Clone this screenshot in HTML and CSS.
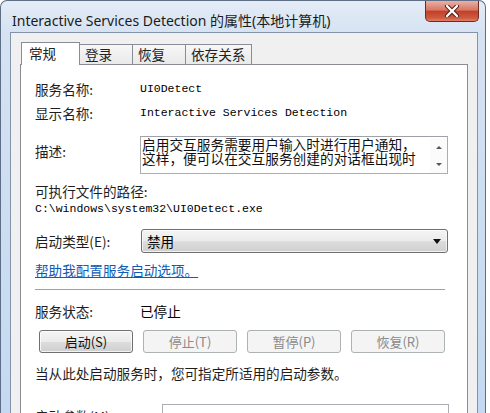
FILE: index.html
```html
<!DOCTYPE html>
<html lang="zh-CN">

<head>
    <meta charset="UTF-8">
    <title>Interactive Services Detection 的属性(本地计算机)</title>
    <link rel="stylesheet" href="styles.css">
</head>

<body>

    <div class="ventana">
        <div class="barra-titulo">
            <span class="titulo">Interactive Services Detection 的属性(本地计算机)</span>
            <div class="cerrar">
                <svg width="16" height="12" viewBox="0 0 16 12">
                    <path d="M3 1 L13 11 M13 1 L3 11" stroke="#4a1a14" stroke-width="4.2" stroke-linecap="round" />
                    <path d="M3 1 L13 11 M13 1 L3 11" stroke="#ffffff" stroke-width="2.4" stroke-linecap="round" />
                </svg>
            </div>
        </div>

        <div class="cliente">
            <div class="pestanas">
                <div class="pestana activa">常规</div>
                <div class="pestana">登录</div>
                <div class="pestana">恢复</div>
                <div class="pestana">依存关系</div>
            </div>

            <div class="panel">
                <div class="fila">
                    <span class="etiqueta">服务名称:</span>
                    <span class="mono">UI0Detect</span>
                </div>
                <div class="fila fila-2">
                    <span class="etiqueta">显示名称:</span>
                    <span class="mono">Interactive Services Detection</span>
                </div>
                <div class="fila fila-desc">
                    <span class="etiqueta etiqueta-desc">描述:</span>
                    <div class="descripcion">
                        <div class="texto-desc">
                            <div>启用交互服务需要用户输入时进行用户通知，</div>
                            <div>这样，便可以在交互服务创建的对话框出现时</div>
                        </div>
                        <div class="scroll">
                            <span class="flecha arriba"></span>
                            <span class="flecha abajo"></span>
                        </div>
                    </div>
                </div>

                <div class="ruta-titulo">可执行文件的路径:</div>
                <div class="mono ruta">C:\windows\system32\UI0Detect.exe</div>

                <div class="fila fila-tipo">
                    <span class="etiqueta">启动类型(E):</span>
                    <div class="combo">
                        <span>禁用</span>
                        <span class="triangulo"></span>
                    </div>
                </div>

                <a class="enlace" href="#">帮助我配置服务启动选项。</a>

                <div class="separador"></div>

                <div class="fila fila-estado">
                    <span class="etiqueta">服务状态:</span>
                    <span>已停止</span>
                </div>

                <div class="botones">
                    <button>启动(S)</button>
                    <button disabled>停止(T)</button>
                    <button disabled>暂停(P)</button>
                    <button disabled>恢复(R)</button>
                </div>

                <div class="nota">当从此处启动服务时，您可指定所适用的启动参数。</div>

                <div class="fila fila-param">
                    <span class="etiqueta etiqueta-param">启动参数(M):</span>
                    <div class="campo"></div>
                </div>
            </div>
        </div>
    </div>

</body>

</html>
```

FILE: styles.css
```css
body {
    margin: 0;
    background: #fff;
    font-family: "Noto Sans CJK SC", sans-serif;
    font-size: 13.6px;
    color: #000;
}

.ventana {
    width: 486px;
    height: 413px;
    box-sizing: border-box;
    border: 1px solid #5d6e86;
    border-bottom: none;
    border-radius: 7px 7px 0 0;
    background: linear-gradient(to bottom, #e4ecf6, #d5e2f2 34px, #c4d9f1);
    overflow: hidden;
}

.barra-titulo {
    display: flex;
    height: 31px;
}

.titulo {
    padding: 10px 0 0 11px;
    font: 14px/20px "Noto Sans", "Noto Sans CJK SC", sans-serif;
    color: #1b1b1b;
    white-space: nowrap;
}

.cerrar {
    margin-left: auto;
    margin-right: 6px;
    width: 54px;
    height: 21px;
    box-sizing: border-box;
    border: 1px solid #6b2a22;
    border-top: none;
    border-radius: 0 0 5px 5px;
    background: linear-gradient(to bottom, #eab0a6, #d77764 45%, #c2402a 52%, #cf5a3f 85%, #e08066);
    display: flex;
    align-items: center;
    justify-content: center;
}

.cliente {
    margin: 0 7px 0 9px;
    height: 400px;
    border: 1px solid #8493a8;
    border-bottom: none;
    background: #f0f0f0;
    padding: 9px 9px 0;
}

.pestanas {
    display: flex;
    align-items: flex-end;
    padding-left: 1px;
    margin-bottom: -1px;
    position: relative;
    z-index: 1;
}

.pestana {
    height: 20px;
    min-width: 54px;
    box-sizing: border-box;
    margin-left: -1px;
    margin-bottom: 1px;
    padding: 0 6px 0 5px;
    border: 1px solid #898c95;
    border-bottom: none;
    background: linear-gradient(to bottom, #f7f7f7, #e9e9e9);
    line-height: 19px;
    color: #222;
}

.pestana.activa {
    height: 23px;
    min-width: 59px;
    margin-left: 0;
    margin-bottom: 0;
    padding-left: 7px;
    background: #fff;
    position: relative;
    z-index: 2;
    line-height: 21px;
}

.panel {
    height: 360px;
    border: 1px solid #898c95;
    background: #fff;
    padding: 14px 0 0 14px;
}

.fila {
    display: flex;
    align-items: center;
    line-height: 20px;
}

.etiqueta {
    width: 105px;
    flex: none;
    color: #1e1e1e;
}

.mono {
    font-family: "Liberation Mono", monospace;
    font-size: 11.5px;
}

.fila-2 {
    margin-top: 4px;
}

.fila-desc {
    margin-top: 13px;
    align-items: flex-start;
}

.etiqueta-desc {
    margin-top: 5px;
}

.descripcion {
    width: 308px;
    height: 38px;
    box-sizing: border-box;
    border: 1px solid #abadb3;
    border-top-color: #9ea1a8;
    display: flex;
    justify-content: space-between;
}

.texto-desc {
    padding: 0 0 0 1px;
    font-size: 13.7px;
    line-height: 14px;
    color: #111;
    white-space: nowrap;
}

.scroll {
    width: 17px;
    margin: 1px 0 0;
    background: #fbfbfb;
    display: flex;
    flex-direction: column;
    justify-content: space-between;
    align-items: center;
    padding: 8px 0 7px;
    box-sizing: border-box;
}

.flecha {
    width: 0;
    height: 0;
    border-left: 3px solid transparent;
    border-right: 3px solid transparent;
}

.flecha.arriba {
    border-bottom: 3px solid #555;
}

.flecha.abajo {
    border-top: 3px solid #555;
}

.ruta-titulo {
    margin-top: 8px;
    line-height: 18px;
    color: #1e1e1e;
}

.ruta {
    margin-top: 1px;
    line-height: 16px;
}

.fila-tipo {
    margin-top: 12px;
}

.combo {
    width: 307px;
    height: 24px;
    box-sizing: border-box;
    margin-left: 1px;
    border: 1px solid #707070;
    border-radius: 3px;
    background: linear-gradient(to bottom, #f4f4f4, #ebebeb 50%, #dddddd 51%, #cfcfcf);
    box-shadow: inset 0 0 0 1px rgba(255, 255, 255, 0.7);
    display: flex;
    align-items: center;
    justify-content: space-between;
    padding: 0 6px 0 5px;
}

.triangulo {
    width: 0;
    height: 0;
    border-left: 4px solid transparent;
    border-right: 4px solid transparent;
    border-top: 5px solid #111;
}

.enlace {
    display: block;
    margin-top: 7px;
    line-height: 20px;
    color: #0f5cb8;
    text-decoration: underline;
    width: max-content;
}

.separador {
    margin-top: 9px;
    width: 410px;
    border-top: 1px solid #a0a0a0;
    border-bottom: 1px solid #fff;
}

.fila-estado {
    margin-top: 10px;
}

.botones {
    display: flex;
    gap: 10px;
    margin-top: 9px;
    padding-left: 4px;
}

button {
    width: 94px;
    height: 23px;
    border: 1px solid #707070;
    border-radius: 3px;
    background: linear-gradient(to bottom, #f4f4f4, #ebebeb 50%, #dddddd 51%, #cfcfcf);
    box-shadow: inset 0 0 0 1px rgba(255, 255, 255, 0.75);
    font-family: "Noto Sans CJK SC", sans-serif;
    font-size: 13px;
    line-height: 20px;
    padding: 0;
    color: #111;
}

button:disabled {
    border-color: #adb2b5;
    background: #f4f4f4;
    box-shadow: none;
    color: #8a8a8a;
}

.nota {
    margin-top: 10px;
    line-height: 20px;
    color: #1e1e1e;
}

.fila-param {
    margin-top: 21px;
    align-items: flex-start;
}

.etiqueta-param {
    width: 127px;
    margin-top: 2px;
}

.campo {
    width: 285px;
    height: 22px;
    border: 1px solid #abadb3;
    background: #fff;
}
```
